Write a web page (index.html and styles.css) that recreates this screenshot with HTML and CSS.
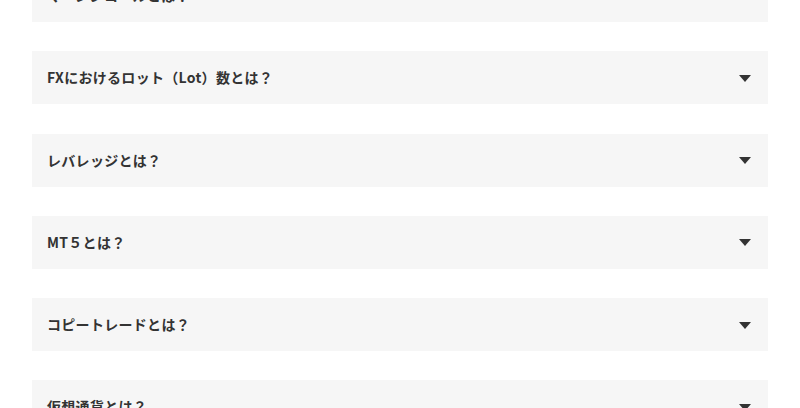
FILE: index.html
```html
<!DOCTYPE html>
<html lang="ja">
<head>
<meta charset="utf-8">
<link rel="stylesheet" href="styles.css">
</head>
<body>
<div class="faq">
  <div class="item"><span class="q">マージンコールとは？</span><span class="arrow"></span></div>
  <div class="item"><span class="q">FXにおけるロット（Lot）数とは？</span><span class="arrow"></span></div>
  <div class="item"><span class="q">レバレッジとは？</span><span class="arrow"></span></div>
  <div class="item"><span class="q">MT５とは？</span><span class="arrow"></span></div>
  <div class="item"><span class="q">コピートレードとは？</span><span class="arrow"></span></div>
  <div class="item"><span class="q">仮想通貨とは？</span><span class="arrow"></span></div>
</div>
</body>
</html>
```

FILE: styles.css
```css
html, body {
  margin: 0;
  padding: 0;
  background: #ffffff;
  overflow: hidden;
}
.faq {
  margin: -31px 32px 0 32px;
  display: flex;
  flex-direction: column;
  gap: 29.25px;
}
.item {
  background: #f6f6f6;
  height: 53px;
  box-sizing: border-box;
  padding: 0 17px 0 15px;
  display: flex;
  align-items: center;
  justify-content: space-between;
  font-family: "Noto Sans CJK JP", "Noto Sans", sans-serif;
  font-weight: 700;
  font-size: 14px;
  letter-spacing: 0.3px;
  color: #333333;
}
.q {
  line-height: 21px;
}
.arrow {
  width: 0;
  height: 0;
  border-left: 6px solid transparent;
  border-right: 6px solid transparent;
  border-top: 7px solid #333333;
  margin-top: 1px;
}
```
